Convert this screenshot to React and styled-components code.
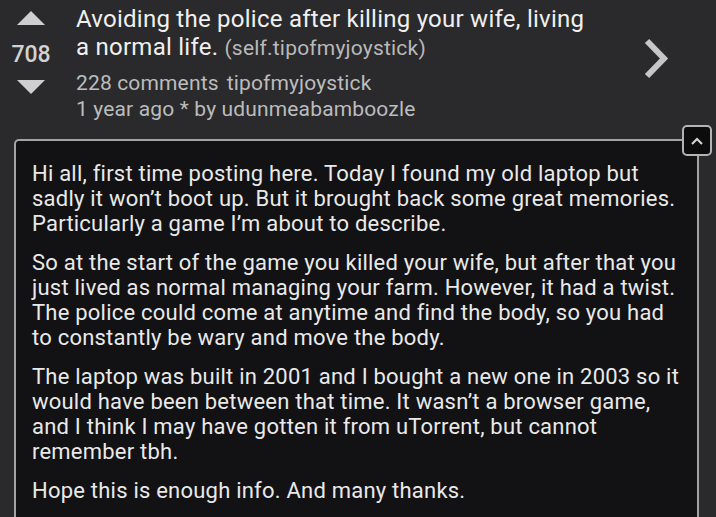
import React from 'react'
import styled, { createGlobalStyle } from 'styled-components'

const GlobalStyle = createGlobalStyle`
  html, body {
    margin: 0;
    padding: 0;
    background: #2a2a2c;
  }
  body {
    font-family: Roboto, "Noto Sans", "Liberation Sans", sans-serif;
    height: 517px;
    overflow: hidden;
  }
`

const post = {
  score: 708,
  title: ['Avoiding the police after killing your wife, living', 'a normal life.'],
  domain: '(self.tipofmyjoystick)',
  comments: 228,
  subreddit: 'tipofmyjoystick',
  age: '1 year ago',
  author: 'udunmeabamboozle',
  // kept as the lines shown on screen
  body: [
    [
      'Hi all, first time posting here. Today I found my old laptop but',
      'sadly it won’t boot up. But it brought back some great memories.',
      'Particularly a game I’m about to describe.',
    ],
    [
      'So at the start of the game you killed your wife, but after that you',
      'just lived as normal managing your farm. However, it had a twist.',
      'The police could come at anytime and find the body, so you had',
      'to constantly be wary and move the body.',
    ],
    [
      'The laptop was built in 2001 and I bought a new one in 2003 so it',
      'would have been between that time. It wasn’t a browser game,',
      'and I think I may have gotten it from uTorrent, but cannot',
      'remember tbh.',
    ],
    ['Hope this is enough info. And many thanks.'],
  ],
}

const Page = styled.div`
  width: 716px;
  height: 517px;
  display: flex;
  flex-direction: column;
`

const Header = styled.header`
  display: flex;
  align-items: flex-start;
`

const Votes = styled.div`
  width: 62px;
  flex-shrink: 0;
  display: flex;
  flex-direction: column;
  align-items: center;
  padding-top: 11px;
  color: #d2d2d2;
`

const Arrow = styled.div`
  width: 0;
  height: 0;
  border-left: 14px solid transparent;
  border-right: 14px solid transparent;
  ${p => (p.$down ? 'border-top' : 'border-bottom')}: 14px solid #cfcfcf;
`

const Score = styled.div`
  font-size: 23px;
  font-weight: 500;
  line-height: 24px;
  margin: 18px 0 13px;
`

const Info = styled.div`
  flex: 1;
  padding: 5px 0 0 14px;
`

const Title = styled.h1`
  margin: 0;
  font-size: 24px;
  font-weight: 400;
  line-height: 28px;
  letter-spacing: 0.25px;
  color: #f0f0f0;
`

const Domain = styled.span`
  font-size: 21px;
  letter-spacing: 0.2px;
  color: #b9b9b9;
`

const MetaList = styled.div`
  margin-top: 8px;
`

const Meta = styled.div`
  font-size: 21px;
  line-height: 26px;
  letter-spacing: 0.15px;
  color: #bcbcbc;
  display: flex;
  gap: 8px;
`

const Next = styled.div`
  width: 73px;
  flex-shrink: 0;
  padding-top: 38px;
`

const Box = styled.article`
  position: relative;
  flex: 1;
  margin: 17px 17px 0 14px;
  background: #121214;
  border: 2px solid #a3a3a3;
  border-bottom: none;
  border-top-left-radius: 5px;
  padding: 20px 16px 0 16px;
  color: #e9e9e9;
  font-size: 22px;
  line-height: 25px;
  letter-spacing: 0.22px;
  white-space: nowrap;
`

const Collapse = styled.button`
  position: absolute;
  top: -16px;
  right: -15px;
  width: 30px;
  height: 31px;
  padding: 0;
  background: #0c0c0c;
  border: 2px solid #b3b3b3;
  border-radius: 5px;
  display: flex;
  align-items: center;
  justify-content: center;
`

const Para = styled.p`
  margin: 0 0 14px;
`

export default function App() {
  return (
    <Page>
      <GlobalStyle />
      <Header>
        <Votes>
          <Arrow />
          <Score>{post.score}</Score>
          <Arrow $down />
        </Votes>
        <Info>
          <Title>
            {post.title[0]}
            <br />
            {post.title[1]} <Domain>{post.domain}</Domain>
          </Title>
          <MetaList>
            <Meta>
              <span>{post.comments} comments</span>
              <span>{post.subreddit}</span>
            </Meta>
            <Meta>
              <span>{post.age} * by {post.author}</span>
            </Meta>
          </MetaList>
        </Info>
        <Next>
          <svg width="26" height="42" viewBox="0 0 26 42">
            <path d="M4 3 L21 20.5 L4 38" fill="none" stroke="#c6c6c6" strokeWidth="6" />
          </svg>
        </Next>
      </Header>
      <Box>
        <Collapse aria-label="collapse">
          <svg width="14" height="10" viewBox="0 0 14 10">
            <path d="M2 8 L7 3 L12 8" fill="none" stroke="#d0d0d0" strokeWidth="2.2" />
          </svg>
        </Collapse>
        {post.body.map((lines, i) => (
          <Para key={i}>
            {lines.map((line, j) => (
              <React.Fragment key={j}>
                {j > 0 && <br />}
                {line}
              </React.Fragment>
            ))}
          </Para>
        ))}
      </Box>
    </Page>
  )
}
